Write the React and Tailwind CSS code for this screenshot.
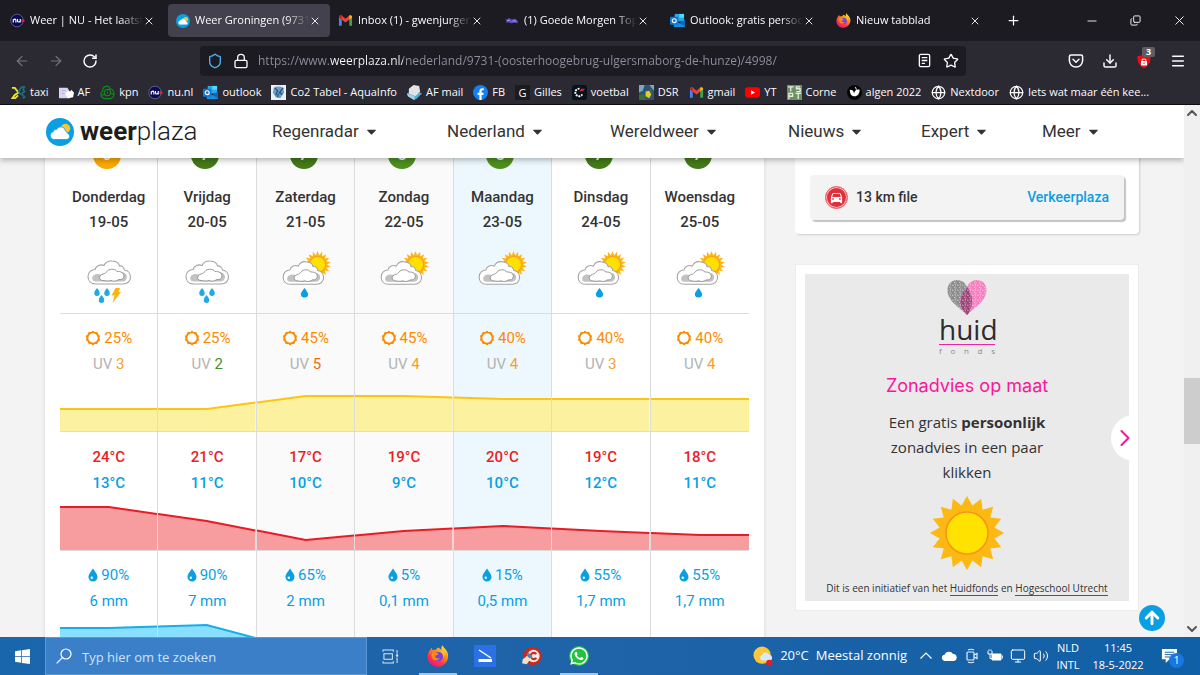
import React from "react";
import {
  ArrowLeft,
  ArrowRight,
  ArrowUp,
  ChevronDown,
  ChevronRight,
  ChevronUp,
  Copy,
  Download,
  Globe,
  Lock,
  Menu,
  Minus,
  Monitor,
  Plus,
  RotateCw,
  Shield,
  Star,
  Volume2,
  X,
} from "lucide-react";
import { FaCaretDown, FaWhatsapp } from "react-icons/fa";
import { MdDirectionsCar } from "react-icons/md";

/* ---------- Site icons ---------- */

const WeerplazaIcon = ({ className }) => (
  <svg viewBox="0 0 28 28" className={className}>
    <circle cx="14" cy="14" r="14" fill="#0a9fe3" />
    <circle cx="19.500" cy="10.500" r="4.700" fill="#fdc52c" />
    <path d="M7.500 21.500a4 4 0 0 1-.3-7.800 3 3 0 0 1 3.300-2.300 4.800 4.800 0 0 1 9 1.700 3 3 0 0 1 2 2.200 3.200 3.200 0 0 1-.5 6.200z" fill="#fff" stroke="#0a9fe3" strokeWidth=".8" />
  </svg>
);

const NuIcon = ({ className }) => (
  <svg viewBox="0 0 16 16" className={className}>
    <circle cx="7.500" cy="8" r="6.700" fill="#0b0b55" stroke="#8d8db5" strokeWidth=".6" />
    <path d="M3.500 10V6.600M3.500 7.500q2.500-2 2.800.3V10M8 6.300v2.400q.5 1.800 2.900 0V6.300V10" fill="none" stroke="#fff" strokeWidth="1.200" />
    <circle cx="13.800" cy="8.200" r="1.700" fill="#e2232f" />
  </svg>
);

const GmailIcon = ({ className }) => (
  <svg viewBox="0 0 16 16" className={className}>
    <path d="M1 13.500V4.500l3 2.200v6.800z" fill="#4285f4" />
    <path d="M15 13.500V4.500l-3 2.200v6.800z" fill="#34a853" />
    <path d="M1 4.700C1 2.500 3 2 4.200 3L8 6l3.800-3C13 2 15 2.500 15 4.700L8 10z" fill="#ea4335" />
    <path d="M12 3v4l3-2.300C15 2.500 13.200 2 12 3z" fill="#fbbc04" />
    <path d="M4 3v4L1 4.700C1 2.500 2.800 2 4 3z" fill="#c5221f" />
  </svg>
);

const TopicsIcon = ({ className }) => (
  <svg viewBox="0 0 16 16" className={className}>
    <path d="M1 6l3 1 1-2 3 2 4-1 3 3-1 2-3-1-3 1-3-1-3 0 1-2z" fill="#5b52c9" />
    <path d="M9 8.500h4M3 8h3" stroke="#b8b2ff" strokeWidth=".8" />
  </svg>
);

const OutlookIcon = ({ className }) => (
  <svg viewBox="0 0 16 16" className={className}>
    <path d="M5 1h10v8H5z" fill="#28a8ea" />
    <path d="M10 1h5v4h-5z" fill="#50d9ff" />
    <path d="M4 7l6 4 6-4v7a1 1 0 0 1-1 1H5a1 1 0 0 1-1-1z" fill="#1490df" />
    <path d="M16 7v7l-6-3z" fill="#1066b5" />
    <rect y="4" width="9" height="8.500" rx="1" fill="#0f78d4" />
    <circle cx="4.500" cy="8.200" r="2.100" fill="none" stroke="#fff" strokeWidth="1.200" />
  </svg>
);

const FirefoxIcon = ({ className, id }) => (
  <svg viewBox="0 0 24 24" className={className}>
    <defs>
      <linearGradient id={id} x1=".85" y1="0" x2=".25" y2="1">
        <stop offset="0" stopColor="#fff44f" />
        <stop offset=".35" stopColor="#ff980e" />
        <stop offset=".7" stopColor="#ff3647" />
        <stop offset="1" stopColor="#e31587" />
      </linearGradient>
    </defs>
    <path d="M3.500 5.500C4 4 4.600 3.500 5 3c.2 1.300.6 2 1.200 2.600 1-.5 2.500-.6 3.500-.3C10.600 3.800 11.800 3 12.500 2.800c.8 1 2 1.700 3.300 2.400-.5-2 .1-3.700 1-4.900.6 2.500 5.700 5 6.200 10.200.8 7.300-4.700 13.200-11.200 13.200C5.400 23.700.7 18.800.7 12.700c0-2.800 1-5.500 2.800-7.200z" fill={`url(#${id})`} />
    <circle cx="12.500" cy="12.500" r="5" fill="#7542e5" />
    <path d="M5.500 8.500c2.500-1.300 5.500.2 7 1.300-.6 1.600-2.400 1.700-3.600 1.800-.5 2.300 2.200 3.700 5.100 2.700-1.500 3.100-6.300 3.300-8.200.3-1-1.700-1.200-4-.3-6.100z" fill="#ff8a16" />
    <path d="M14.500 7.500c2.300.8 3.800 3 3.200 6 2.200-2.300 1.800-5.600-.7-7.600z" fill="#ffbd2f" />
  </svg>
);

const TaxiIcon = ({ className }) => (
  <svg viewBox="0 0 16 16" className={className} fill="none" strokeWidth="2">
    <path d="M1 3h3l4 5-4 2.500L1.500 14h3l3-3" stroke="#e8e337" />
    <path d="M8 8l2-4.500 2-1.500h2l-1 3 1.500 2-3 1.500M9 9l3 1 2.500 3-2 1" stroke="#1d6b77" />
  </svg>
);

const AfIcon = ({ className }) => (
  <svg viewBox="0 0 16 16" className={className}>
    <path d="M0 3h9l2 3v8H0z" fill="#d9d5f2" />
    <path d="M7 8l3-2 2 1 1-2 3 3-1 5-5 1-3-3z" fill="#fff" />
    <path d="M3 6h4M3 9h3" stroke="#b2aadd" />
  </svg>
);

const KpnIcon = ({ className }) => (
  <svg viewBox="0 0 16 16" className={className} fill="none" stroke="#0b8f17" strokeWidth="1.200">
    <path d="M6 1.500c2-1 4.500.3 4.500 2.500 2.500.3 4.300 3 4.500 6-.2 3-3 4.500-5 4.500H5C2.500 14 .8 12 1 9c.3-1 1-1.600 2-2C2.500 5 3.500 2 6 1.500z" />
    <path d="M5.500 5.500l4-1 2 3-1 3.500-4 .5-2-3zM1.500 11l4-1M12 9l2.500 1M8 7v2" />
  </svg>
);

const Co2Icon = ({ className }) => (
  <svg viewBox="0 0 16 16" className={className}>
    <rect width="16" height="16" fill="#e9f1f8" />
    <path d="M3 3c3-2 7-2 10 0l1 5-4 6-5-1-3-5z" fill="#6f9cc6" />
    <path d="M4 3l3 3-2 5M13 3L9 8l3 2M7 13l1-4" stroke="#244d82" fill="none" strokeWidth="1.300" />
  </svg>
);

const AfMailIcon = ({ className }) => (
  <svg viewBox="0 0 16 16" className={className}>
    <path d="M0 9l8-4 8 4-6 6-3 1-6-4z" fill="#4fa8d8" />
    <path d="M2 4l5-4 6 1 1 6-5 5-7-3z" fill="#e3e3e3" />
    <path d="M0 9l8 3v4L1 12z" fill="#a9d3ea" />
  </svg>
);

const FacebookIcon = ({ className }) => (
  <svg viewBox="0 0 16 16" className={className}>
    <circle cx="8" cy="8" r="8" fill="#1380f5" />
    <path d="M6.800 16v-5.400H4.900V8.200h1.900V6.700c0-2.200 1.300-3.300 3.100-3.300l1.500.1v2h-1c-1 0-1.200.6-1.200 1.300v1.400h2.100l-.3 2.400H9.200V16z" fill="#fff" />
  </svg>
);

const GillesIcon = () => (
  <span className="grid size-[15px] place-items-center bg-[#1c1b1b] text-[11px]/[15px] text-white">G</span>
);

const VoetbalIcon = ({ className }) => (
  <svg viewBox="0 0 16 16" className={className}>
    <rect width="16" height="16" rx="3" fill="#06131f" />
    <path d="M8 4a4 4 0 1 0 3 6" stroke="#fff" strokeWidth="2" strokeDasharray="2 1" fill="none" />
    <path d="M8 7l2-3h4l-2 2z" fill="#f0202c" />
  </svg>
);

const DsrIcon = ({ className }) => (
  <svg viewBox="0 0 16 16" className={className}>
    <rect width="16" height="16" fill="#2c5374" />
    <path d="M0 0h6l-2 6-4 2zM11 0h5v6z" fill="#7fa9c0" />
    <path d="M0 11l5-2 3 7H0zM10 4l4 1v4z" fill="#3f6b3c" />
    <path d="M7 7l4-1 2 4-2 4-4-2z" fill="#e6cd22" />
  </svg>
);

const YoutubeIcon = ({ className }) => (
  <svg viewBox="0 0 16 16" className={className}>
    <rect y="2.500" width="16" height="11" rx="3" fill="#f00" />
    <path d="M6.400 5.500v5l4.200-2.500z" fill="#fff" />
  </svg>
);

const CorneIcon = ({ className }) => (
  <svg viewBox="0 0 16 16" className={className}>
    <rect width="16" height="16" fill="#6d8f63" />
    <path d="M1 2h6M4 2v5M14 2h-4v2h4v3h-4M2 15V9h4v3H2M9 9h6M12 9v6" stroke="#e3eedd" strokeWidth="1.400" fill="none" />
  </svg>
);

const AlgenIcon = ({ className }) => (
  <svg viewBox="0 0 16 16" className={className}>
    <circle cx="8" cy="8" r="8" fill="#050505" />
    <path d="M3 5c3 0 4 1 4.500 4C8 6 10 4 13.500 5c0 4-2 7-5.500 7S3 9 3 5z" fill="#fff" />
    <path d="M9 2l1 3" stroke="#fff" />
  </svg>
);

/* ---------- Browser chrome ---------- */

const tabs = [
  { title: "Weer | NU - Het laatste", icon: <NuIcon className="size-[15px]" /> },
  { title: "Weer Groningen (9731)", icon: <WeerplazaIcon className="size-[14px]" />, active: true },
  { title: "Inbox (1) - gwenjurgen", icon: <GmailIcon className="size-[15px]" /> },
  { title: "(1) Goede Morgen Top", icon: <TopicsIcon className="size-[15px]" /> },
  { title: "Outlook: gratis persoon", icon: <OutlookIcon className="size-[15px]" /> },
  { title: "Nieuw tabblad", icon: <FirefoxIcon id="ff-tab" className="size-[15px]" /> },
];

const bookmarks = [
  { label: "taxi", icon: <TaxiIcon className="size-[15px]" /> },
  { label: "AF", icon: <AfIcon className="size-[15px]" /> },
  { label: "kpn", icon: <KpnIcon className="size-[15px]" /> },
  { label: "nu.nl", icon: <NuIcon className="size-[15px]" /> },
  { label: "outlook", icon: <OutlookIcon className="size-[15px]" /> },
  { label: "Co2 Tabel - AquaInfo", icon: <Co2Icon className="size-[15px]" /> },
  { label: "AF mail", icon: <AfMailIcon className="size-[15px]" /> },
  { label: "FB", icon: <FacebookIcon className="size-[15px]" /> },
  { label: "Gilles", icon: <GillesIcon /> },
  { label: "voetbal", icon: <VoetbalIcon className="size-[15px]" /> },
  { label: "DSR", icon: <DsrIcon className="size-[15px]" /> },
  { label: "gmail", icon: <GmailIcon className="size-[15px]" /> },
  { label: "YT", icon: <YoutubeIcon className="size-[15px]" /> },
  { label: "Corne", icon: <CorneIcon className="size-[15px]" /> },
  { label: "algen 2022", icon: <AlgenIcon className="size-[15px]" /> },
  { label: "Nextdoor", icon: <Globe className="size-[15px]" /> },
  { label: "Iets wat maar één kee...", icon: <Globe className="size-[15px]" /> },
];

const TabStrip = () => (
  <div className="flex h-[41px] items-center bg-[#1c1b22] pl-[2px] text-[11px] text-[#fbfbfe]">
    {tabs.map((tab) => (
      <div
        key={tab.title}
        className={
          tab.active
            ? "flex h-[33px] w-[162px] items-center rounded bg-[#42414d] pr-[9px] pl-2"
            : "flex h-[33px] w-[166px] items-center pr-[13px] pl-2"
        }
      >
        <span className="mr-[5px] shrink-0">{tab.icon}</span>
        <button
          type="button"
          className="min-w-0 flex-1 overflow-hidden text-left whitespace-nowrap mask-r-from-80%"
        >
          {tab.title}
        </button>
        <button type="button" aria-label="Tabblad sluiten" className="shrink-0">
          <X className="size-3" strokeWidth={1.800} />
        </button>
      </div>
    ))}
    <button type="button" aria-label="Nieuw tabblad" className="ml-3">
      <Plus className="size-[15px]" />
    </button>
    <div className="ml-auto flex items-center gap-[31px] pr-[13px]">
      <button type="button" aria-label="Minimaliseren">
        <Minus className="size-[14px]" strokeWidth={1.500} />
      </button>
      <button type="button" aria-label="Herstellen">
        <Copy className="size-[11px] -scale-x-100 rotate-180" strokeWidth={2} />
      </button>
      <button type="button" aria-label="Sluiten">
        <X className="size-[15px]" strokeWidth={1.500} />
      </button>
    </div>
  </div>
);

const Toolbar = () => (
  <div className="flex h-[39px] items-center bg-[#2b2a33] text-[#fbfbfe]">
    <div className="flex w-[200px] shrink-0 items-center gap-[18px] pl-[14px]">
      <button type="button" aria-label="Terug" className="text-[#75747c]">
        <ArrowLeft className="size-4" strokeWidth={1.800} />
      </button>
      <button type="button" aria-label="Vooruit" className="text-[#75747c]">
        <ArrowRight className="size-4" strokeWidth={1.800} />
      </button>
      <button type="button" aria-label="Vernieuwen">
        <RotateCw className="size-4" strokeWidth={2.200} />
      </button>
    </div>
    <div className="flex h-[30px] flex-1 items-center rounded bg-[#1c1b22] px-[7px]">
      <Shield className="mr-[10px] size-4 shrink-0 text-[#4db5f5]" strokeWidth={2} />
      <Lock className="mr-[9px] size-4 shrink-0" strokeWidth={2} />
      <input
        type="text"
        aria-label="Adres"
        defaultValue="https://www.weerplaza.nl/nederland/9731-(oosterhoogebrug-ulgersmaborg-de-hunze)/4998/"
        className="min-w-0 flex-1 bg-[linear-gradient(90deg,#8f8f9d_72px,#fbfbfe_72px,#fbfbfe_145px,#8f8f9d_145px)] bg-clip-text text-[12px] text-transparent outline-none"
      />
      <button type="button" aria-label="Leesmodus" className="mr-[11px]">
        <svg viewBox="0 0 16 16" className="size-[15px]" fill="none" stroke="currentColor" strokeWidth="1.400">
          <rect x="2.500" y="1.500" width="11" height="13" rx="1.500" />
          <path d="M5 5h6M5 8h6M5 11h3.500" />
        </svg>
      </button>
      <button type="button" aria-label="Bladwijzer maken">
        <Star className="size-4" strokeWidth={2} />
      </button>
    </div>
    <div className="ml-[102px] flex shrink-0 items-center gap-[18px] pr-[14px]">
      <button type="button" aria-label="Pocket">
        <svg viewBox="0 0 16 16" className="size-4" fill="none" stroke="currentColor" strokeWidth="1.500" strokeLinecap="round" strokeLinejoin="round">
          <path d="M3 2h10a1.600 1.600 0 0 1 1.600 1.600V7.500a6.600 6.600 0 0 1-13.200 0V3.600A1.600 1.600 0 0 1 3 2z" />
          <path d="M5 6.300l3 2.900 3-2.900" />
        </svg>
      </button>
      <button type="button" aria-label="Downloads">
        <Download className="size-4" strokeWidth={2.200} />
      </button>
      <button type="button" aria-label="Advertentieblokkering" className="relative">
        <svg viewBox="0 0 16 16" className="size-4">
          <path d="M8 1c2 1.500 4 2 6.500 2C15 9 12.500 13 8 15.500 3.500 13 1 9 1.500 3 4 3 6 2.500 8 1z" fill="#ee0c14" />
          <path d="M5 8h6v4.500H5z" fill="#fff" />
          <path d="M6.200 8V6.200h3.600V8" fill="none" stroke="#fff" />
          <path d="M8 9.500v1.500" stroke="#ee0c14" />
        </svg>
        <span className="absolute -top-[6px] left-[6px] rounded-xs bg-[#5d5d62] px-1 text-[9px]/[10px] font-bold text-white">3</span>
      </button>
      <button type="button" aria-label="Menu">
        <Menu className="size-4" strokeWidth={2.200} />
      </button>
    </div>
  </div>
);

const BookmarksBar = () => (
  <div className="flex h-[25px] items-center gap-[10px] overflow-hidden border-b border-[#0c0c12] bg-[#2b2a33] pl-[11px] text-[11px] text-[#fbfbfe]">
    {bookmarks.map((item) => (
      <a key={item.label} href="#" className="flex shrink-0 items-center gap-1 whitespace-nowrap">
        {item.icon}
        {item.label}
      </a>
    ))}
  </div>
);

/* ---------- Forecast ---------- */

const days = [
  { name: "Donderdag", date: "19-05", grade: 6, sky: "storm", sun: 25, uv: 3, max: 24, min: 13, chance: 90, rain: "6" },
  { name: "Vrijdag", date: "20-05", grade: 7, sky: "rain", sun: 25, uv: 2, max: 21, min: 11, chance: 90, rain: "7" },
  { name: "Zaterdag", date: "21-05", grade: 7, sky: "sunRain", sun: 45, uv: 5, max: 17, min: 10, chance: 65, rain: "2" },
  { name: "Zondag", date: "22-05", grade: 8, sky: "sun", sun: 45, uv: 4, max: 19, min: 9, chance: 5, rain: "0,1" },
  { name: "Maandag", date: "23-05", grade: 8, sky: "sun", sun: 40, uv: 4, max: 20, min: 10, chance: 15, rain: "0,5" },
  { name: "Dinsdag", date: "24-05", grade: 7, sky: "sunRain", sun: 40, uv: 3, max: 19, min: 12, chance: 55, rain: "1,7" },
  { name: "Woensdag", date: "25-05", grade: 7, sky: "sunRain", sun: 40, uv: 4, max: 18, min: 11, chance: 55, rain: "1,7" },
];

const columnStyles = [
  "border-r border-[#dcdcdc]",
  "border-r border-[#dcdcdc]",
  "border-r border-[#dcdcdc] bg-[#fafafa]",
  "border-r border-[#dcdcdc] bg-[#fafafa]",
  "border-r border-[#dcdcdc] bg-[#edf8fe]",
  "border-r border-[#dcdcdc]",
  "",
];

const gradeStyles = { 6: "bg-[#fba800]", 7: "bg-[#447a19]", 8: "bg-[#4e8f1e]" };
const uvStyles = { 2: "text-[#4a8b2a]", 3: "text-[#f2a12e]", 4: "text-[#f2a12e]", 5: "text-[#f26a10]" };

// Line height above the bottom of the 54px chart strip, per day
const sunLine = [22, 22, 35, 35, 32, 32, 32];
const tempLine = [43, 29, 10, 19, 24, 19, 15];
const rainLine = [40, 43, 17, 4, 6, 14, 14];

function rayPath(cx, cy, outer, inner, count) {
  const points = [];
  for (let i = 0; i < count * 2; i++) {
    const r = i % 2 ? inner : outer;
    const a = (Math.PI * i) / count - Math.PI / 2;
    points.push(`${(cx + r * Math.cos(a)).toFixed(2)},${(cy + r * Math.sin(a)).toFixed(2)}`);
  }
  return points.join(" ");
}

const drop = "c2.200 2.800 2.700 3.800 2.700 5.200a2.700 2.700 0 0 1-5.400 0c0-1.400.5-2.400 2.700-5.200z";

const SkyIcon = ({ sky }) => {
  const sunny = sky === "sun" || sky === "sunRain";
  return (
    <svg viewBox="0 0 56 56" className="mx-auto size-14" aria-hidden="true">
      {sunny && (
        <>
          <polygon points={rayPath(39.500, 17.500, 13.500, 9.500, 18)} fill="#fdb515" />
          <circle cx="39.500" cy="17.500" r="8" fill="#ffe100" stroke="#f7941d" strokeWidth=".9" />
        </>
      )}
      <g transform={sunny ? "translate(-1.500 1) scale(.95 .98)" : undefined}>
        <path d="M15 37C9 37 7 33 7 29.500 7 25 10.500 22.500 14 22.500 15 18.500 19.500 17 23 18.500 24.500 15 28 13.700 31 14 35 14.200 38 16 38.500 19 41 18.500 43 20.500 43.500 23 47 23.500 49.500 26.500 49.500 30 49.500 34 46.500 37 42 37z" fill="#fff" stroke="#a3a3a3" strokeWidth="1.100" />
        <path d="M15 34.500C11 34.500 10.500 31 12 29c2-2.500 6-2 8-1.500L40 25c5 0 7 4 5.500 7-.8 1.700-2 2.500-4 2.500z" fill="#c2c2c2" />
        <path d="M22 33.500c-4 0-5-5 0-6.500 2-.5 2.500-1 4-2.500 1-2.500 8-3.500 10 0 4-.3 7 1.500 7 4.500 0 3-3 4-5 3.500-3 2-6 2-8 1-3 .8-5 .5-8 0z" fill="#fff" stroke="#8c8c8c" strokeWidth=".9" />
      </g>
      {sky === "sunRain" && <path d="M26.500 41c3 4 3.600 5 3.600 6.200a3.600 3.300 0 0 1-7.200 0c0-1.200.6-2.200 3.600-6.200z" fill="#0a9fe3" />}
      {(sky === "rain" || sky === "storm") && (
        <g fill="#1fa9e6" transform={sky === "storm" ? "translate(-7 0)" : undefined}>
          <path d={`M23 41${drop}`} />
          <path d={`M33 41${drop}`} />
          <path d={`M27.500 48${drop}`} />
        </g>
      )}
      {sky === "storm" && <path d="M34.500 41H39l-1.500 4H40L31.500 56l2-7.500h-3z" fill="#fdb515" />}
    </svg>
  );
};

const ChartCell = ({ line, index, stroke, fill, className }) => {
  const value = line[index];
  const prev = index > 0 ? line[index - 1] : value;
  const next = index < line.length - 1 ? line[index + 1] : value;
  const top = `0,${54 - (prev + value) / 2} 50,${54 - value} 100,${54 - (value + next) / 2}`;
  return (
    <td className={`${className} border-b border-b-[#dcdcdc] p-0`}>
      <svg viewBox="0 0 100 54" preserveAspectRatio="none" className="block h-[54px] w-full" aria-hidden="true">
        <polygon points={`${top} 100,54 0,54`} fill={fill} />
        <polyline points={top} fill="none" stroke={stroke} strokeWidth="2" vectorEffect="non-scaling-stroke" />
      </svg>
    </td>
  );
};

const SunSmall = () => (
  <svg viewBox="0 0 16 16" className="size-4" aria-hidden="true">
    <circle cx="8" cy="8" r="5.500" fill="none" stroke="#fb8a00" strokeWidth="1.600" />
    <polygon points={rayPath(8, 8, 7, 5.700, 10)} fill="none" stroke="#fb8a00" strokeWidth="1" />
  </svg>
);

const DropSmall = () => (
  <svg viewBox="0 0 10 14" className="h-[14px] w-[10px]" aria-hidden="true">
    <path d="M5 .5c3 4.500 4.500 6.200 4.500 8.500a4.500 4.500 0 0 1-9 0C.5 6.700 2 5 5 .5z" fill="#0a9fe3" />
    <circle cx="3.800" cy="9.800" r="1.200" fill="#fff" />
  </svg>
);

const ForecastTable = () => (
  <section className="min-w-0 flex-1 bg-white px-[15px] shadow-[0_0_4px_rgba(0,0,0,0.12)]">
    <table className="w-full table-fixed border-separate border-spacing-0 text-center text-[15px]/[26px]">
      <thead>
        <tr>
          {days.map((day, i) => (
            <th key={day.name} scope="col" className={`${columnStyles[i]} border-b border-b-[#dcdcdc] px-0 pt-9 pb-[10px] font-medium text-[#333]`}>
              <div className="mb-4 flex justify-center pr-1">
                <span className={`${gradeStyles[day.grade]} grid size-7 place-items-center rounded-full text-base text-white`}>
                  {day.grade}
                </span>
              </div>
              <div className="leading-[25px]">{day.name}</div>
              <div className="mb-3 leading-[25px]">{day.date}</div>
              <SkyIcon sky={day.sky} />
            </th>
          ))}
        </tr>
      </thead>
      <tbody>
        <tr>
          {days.map((day, i) => (
            <td key={day.name} className={`${columnStyles[i]} px-0 pt-[11px] pb-0`}>
              <div className="flex items-center justify-center gap-[3px] text-[#fb8a00]">
                <SunSmall />
                {day.sun}%
              </div>
              <div className="text-[#b3b3b3]">
                UV <span className={uvStyles[day.uv]}>{day.uv}</span>
              </div>
            </td>
          ))}
        </tr>
        <tr>
          {days.map((day, i) => (
            <ChartCell key={day.name} line={sunLine} index={i} stroke="#fdc513" fill="#fcf19f" className={columnStyles[i]} />
          ))}
        </tr>
        <tr>
          {days.map((day, i) => (
            <td key={day.name} className={`${columnStyles[i]} px-0 pt-3 pb-0 font-medium`}>
              <div className="text-[#ec1c24]">{day.max}°C</div>
              <div className="text-[#0a9fe3]">{day.min}°C</div>
            </td>
          ))}
        </tr>
        <tr>
          {days.map((day, i) => (
            <ChartCell key={day.name} line={tempLine} index={i} stroke="#e81c25" fill="#f79c9f" className={columnStyles[i]} />
          ))}
        </tr>
        <tr>
          {days.map((day, i) => (
            <td key={day.name} className={`${columnStyles[i]} px-0 pt-[11px] pb-0 text-[#0a9fe3]`}>
              <div className="flex items-center justify-center gap-[3px]">
                <DropSmall />
                {day.chance}%
              </div>
              <div>{day.rain} mm</div>
            </td>
          ))}
        </tr>
        <tr>
          {days.map((day, i) => (
            <ChartCell key={day.name} line={rainLine} index={i} stroke="#14aee8" fill="#8adfff" className={columnStyles[i]} />
          ))}
        </tr>
      </tbody>
    </table>
  </section>
);

/* ---------- Page ---------- */

const SiteHeader = () => (
  <header className="absolute inset-x-0 top-0 z-10 flex h-[53px] items-center bg-white pr-[80px] pl-[46px] shadow-[0_2px_6px_rgba(0,0,0,0.3)]">
    <a href="#" className="flex w-[226px] shrink-0 items-center gap-[6px] text-[26px] text-[#1d1d1b]">
      <WeerplazaIcon className="size-7" />
      <span>
        <span className="font-bold">weer</span>
        <span className="font-light">plaza</span>
      </span>
    </a>
    <nav className="grid flex-1 grid-cols-[175fr_163fr_178fr_133fr_121fr_62fr] text-[17px] text-[#333]">
      {["Regenradar", "Nederland", "Wereldweer", "Nieuws", "Expert", "Meer"].map((item) => (
        <a key={item} href="#" className="flex items-center gap-[5px] whitespace-nowrap">
          {item}
          <FaCaretDown className="size-[15px]" />
        </a>
      ))}
    </nav>
  </header>
);

const TrafficCard = () => (
  <section className="rounded-b bg-white px-[15px] pt-[70px] pb-[14px] shadow-[1px_1px_2px_rgba(0,0,0,0.15)]">
    <div className="flex h-[45px] items-center rounded bg-[#f3f3f3] px-[15px] text-[14px] font-medium text-[#333] shadow-[2px_2px_1px_#c4c4c4]">
      <span className="mr-2 grid size-[23px] place-items-center rounded-full border border-[#e8707a] bg-[#e0303c] text-white ring-1 ring-white/70 ring-inset">
        <MdDirectionsCar className="size-[15px]" />
      </span>
      13 km file
      <a href="#" className="ml-auto text-[#0a9fe3]">Verkeerplaza</a>
    </div>
  </section>
);

const HuidfondsLogo = () => (
  <div className="mx-auto w-14 font-['Open_Sans',sans-serif]">
    <svg viewBox="0 0 40 36" className="mx-auto block h-9 w-10" aria-hidden="true">
      <defs>
        <pattern id="speckle" width="5" height="5" patternUnits="userSpaceOnUse">
          <path d="M0 1l1.500.5M3 0l.5 1.500M2 3.500l1.500-.5M4.500 4l-1 .8" stroke="#fff" strokeWidth=".7" opacity=".8" />
        </pattern>
      </defs>
      <path d="M20 36C12 28 .5 22 .5 11 .5 0 15-3 20 8c3 4 5 8 5 15 0 5-2 10-5 13z" fill="#8c8c8c" />
      <path d="M20 36c8-8 19.500-14 19.500-25C39.500 0 25-3 20 8c-4 5-7 10-7 16 1 5 4 9 7 12z" fill="#f57dc0" />
      <path d="M20 8c3 4 5 8 5 15 0 5-2 10-5 13-3-3-6-7-7-12 0-6 3-11 7-16z" fill="#9b4478" />
      <path d="M20 36C12 28 .5 22 .5 11 .5 0 15-3 20 8c5-11 19.500-8 19.500 3 0 11-11.500 17-19.500 25z" fill="url(#speckle)" />
    </svg>
    <div className="border-b border-b-[#f0259b] text-center text-[28px]/[29px] text-[#2d2d2d]">huid</div>
    <div className="text-[8px]/[12px] text-[#8a8a8a] [text-align-last:justify]">f o n d s</div>
  </div>
);

const SunAdviceCard = () => (
  <section className="relative mt-[30px] overflow-hidden border border-[#ececec] bg-white p-[9px]">
    <div className="bg-[#eaeaea] py-[5px] text-center font-['Open_Sans',sans-serif] text-[#333]">
      <HuidfondsLogo />
      <h2 className="mt-[17px] font-['Inter',sans-serif] text-[18px]/[24px] text-[#f9179a]">Zonadvies op maat</h2>
      <p className="mx-auto mt-3 w-[170px] text-[15px]/[25px]">
        Een gratis <strong>persoonlijk</strong> zonadvies in een paar klikken
      </p>
      <svg viewBox="0 0 74 74" className="mx-auto mt-[11px] block size-[74px]" aria-hidden="true">
        <polygon points={rayPath(37, 37, 37, 28, 16)} fill="#fdb913" />
        <circle cx="37" cy="37" r="21" fill="#ffe200" stroke="#f7941d" strokeWidth="1.600" />
      </svg>
      <p className="mt-[11px] text-[10px]/[15px] whitespace-nowrap">
        Dit is een initiatief van het <a href="#" className="border-b border-[#555]">Huidfonds</a> en{" "}
        <a href="#" className="border-b border-[#555]">Hogeschool Utrecht</a>
      </p>
    </div>
    <button
      type="button"
      aria-label="Volgende"
      className="absolute top-[150px] -right-[19px] flex size-[46px] items-center rounded-full bg-white text-[#f9179a]"
    >
      <ChevronRight className="size-7" strokeWidth={1.800} />
    </button>
  </section>
);

const ScrollBar = () => (
  <div className="flex w-4 shrink-0 flex-col items-center bg-[#f0f0f0] text-[#555]">
    <ChevronUp className="size-4" strokeWidth={3} />
    <div className="flex-[258]" />
    <div className="h-[66px] w-full bg-[#cdcdcd]" />
    <div className="flex-[177]" />
    <ChevronDown className="size-4" strokeWidth={3} />
  </div>
);

/* ---------- Taskbar ---------- */

const Taskbar = () => (
  <footer className="flex h-[38px] shrink-0 items-center bg-linear-to-r from-[#1a66ac] via-[#1f63a8] to-[#0f60a6] text-white">
    <button type="button" aria-label="Start" className="grid w-[45px] shrink-0 place-items-center">
      <svg viewBox="0 0 16 16" className="size-[15px]" fill="#fff">
        <path d="M0 2.300l6.500-.9v6.200H0zM7.300 1.300L16 0v7.600H7.300zM0 8.400h6.500v6.200L0 13.700zM7.300 8.400H16V16l-8.700-1.200z" />
      </svg>
    </button>
    <label className="flex h-full w-[322px] items-center gap-[10px] border border-[#5b98d8] bg-[#3a7fc8] px-[10px]">
      <svg viewBox="0 0 16 16" className="size-4 shrink-0" fill="none" stroke="currentColor" strokeWidth="1.200">
        <circle cx="10" cy="6" r="5" />
        <path d="M6.300 9.700L.7 15.300" />
      </svg>
      <input
        type="text"
        aria-label="Zoeken"
        placeholder="Typ hier om te zoeken"
        className="min-w-0 flex-1 bg-transparent pt-[3px] text-[13px] outline-none placeholder:text-[#cfe2f6]"
      />
    </label>
    <button type="button" aria-label="Taakweergave" className="grid h-full w-[47px] place-items-center">
      <svg viewBox="0 0 18 16" className="h-[15px] w-[17px]" fill="none" stroke="#d6e6f5" strokeWidth="1.100">
        <path d="M1 3V1h11v2M1 13v2h11v-2M2 5h9v6H2zM16 1v4M16 9v6" />
        <circle cx="16" cy="7" r=".8" fill="#fff" />
      </svg>
    </button>
    <button type="button" aria-label="Firefox" className="grid h-full w-[47px] place-items-center bg-[linear-gradient(#9cc8f5,#9cc8f5)] bg-[length:38px_2px] bg-bottom bg-no-repeat">
      <FirefoxIcon id="ff-task" className="size-[22px]" />
    </button>
    <button type="button" aria-label="Scanner" className="grid h-full w-[47px] place-items-center">
      <svg viewBox="0 0 22 22" className="size-[22px]">
        <rect width="22" height="22" fill="#2b70e4" />
        <path d="M5 5l12 8" stroke="#fff" strokeWidth="1.500" />
        <path d="M4.500 14H18v3H4.500z" fill="#fff" />
      </svg>
    </button>
    <button type="button" aria-label="CCleaner" className="grid h-full w-[47px] place-items-center">
      <svg viewBox="0 0 22 22" className="size-[21px]">
        <circle cx="12" cy="10.500" r="9.500" fill="#d3261b" />
        <circle cx="13" cy="10.500" r="6.500" fill="#f6e9e4" />
        <path d="M16 8.500a3.300 3.300 0 1 0 0 4" fill="none" stroke="#d3261b" strokeWidth="2.200" />
        <path d="M8 9l3 3-5 7-5-1 1-4z" fill="#f0e2c8" />
        <path d="M8 7l4 4-3 2-3-3z" fill="#3f86c9" />
      </svg>
    </button>
    <button type="button" aria-label="WhatsApp" className="grid h-full w-[47px] place-items-center bg-[linear-gradient(#9cc8f5,#9cc8f5)] bg-[length:38px_2px] bg-bottom bg-no-repeat">
      <span className="grid size-5 place-items-center rounded-full bg-[#25c23f]">
        <FaWhatsapp className="size-5" />
      </span>
    </button>

    <div className="ml-auto flex h-full shrink-0 items-center">
      <button type="button" className="mr-[11px] flex items-center gap-[7px] text-[13px] whitespace-nowrap">
        <svg viewBox="0 0 22 22" className="size-5">
          <circle cx="10" cy="10" r="9.500" fill="#fdc63b" />
          <path d="M10 16a3.500 3.500 0 0 1 0-6.500 4.500 4.500 0 0 1 8 0 3.400 3.400 0 0 1 1 6.500z" fill="#d7eafa" />
          <circle cx="18" cy="18.500" r="3.500" fill="#e11d2b" />
        </svg>
        <span>20°C</span>
        <span>Meestal zonnig</span>
      </button>
      <div className="flex items-center gap-[7px]">
        <svg viewBox="0 0 16 16" className="size-4" fill="none" stroke="#fff" strokeWidth="1.200">
          <path d="M2.500 10.500L8 5l5.500 5.500" />
        </svg>
        <svg viewBox="0 0 16 16" className="size-4">
          <path d="M3.500 13a3.200 3.200 0 0 1 0-6.300 4.700 4.700 0 0 1 8.500-.6 3.500 3.500 0 0 1 1 6.900z" fill="#fff" />
        </svg>
        <svg viewBox="0 0 16 16" className="size-4" fill="none" stroke="#e6f0fa" strokeWidth="1.200">
          <rect x="3" y="4" width="7" height="8" rx="1" />
          <path d="M10 7l3-1.500v5L10 9M4 2q3-1.500 6 0M4 14q3 1.500 6 0" />
        </svg>
        <svg viewBox="0 0 16 16" className="size-4" fill="none" stroke="#fff">
          <path d="M5 6h9v6H5z" fill="#fff" />
          <path d="M15.300 7.500v3M1 3v3h4V3M2 3V1.500M4 3V1.500M3 6v4.500h2" />
        </svg>
        <Monitor className="size-4" strokeWidth={1.500} />
        <Volume2 className="size-4" strokeWidth={1.500} />
      </div>
      <div className="w-[38px] text-center text-[11px]/[17px]">
        <div>NLD</div>
        <div>INTL</div>
      </div>
      <div className="w-[62px] text-center text-[11px]/[17px] whitespace-nowrap">
        <div>11:45</div>
        <div>18-5-2022</div>
      </div>
      <button type="button" aria-label="Meldingen" className="relative mr-[15px] ml-3 h-5 w-6">
        <svg viewBox="0 0 18 18" className="size-[17px]">
          <path d="M1 1h16v11H9l-4 4v-4H1z" fill="#fff" />
          <path d="M4 4.500h10M4 7h10M4 9.500h6" stroke="#1160a6" />
        </svg>
        <span className="absolute top-[7px] left-2 grid size-[15px] place-items-center rounded-full bg-[#1878e0] text-[10px]/[15px]">1</span>
      </button>
    </div>
  </footer>
);

const App = () => (
  <div className="flex h-screen flex-col overflow-hidden font-['Open_Sans','Noto_Sans',sans-serif]">
    <TabStrip />
    <Toolbar />
    <BookmarksBar />
    <div className="flex min-h-0 flex-1 bg-[#f3f3f3] font-['Roboto',sans-serif]">
      <div className="relative min-w-0 flex-1 overflow-hidden">
        <SiteHeader />
        <main className="flex items-start gap-[31px] px-[45px]">
          <ForecastTable />
          <aside className="w-[344px] shrink-0">
            <TrafficCard />
            <SunAdviceCard />
          </aside>
        </main>
        <button
          type="button"
          aria-label="Naar boven"
          className="absolute right-[19px] bottom-[6px] grid size-[26px] place-items-center rounded-full bg-[#0a9fe3] text-white"
        >
          <ArrowUp className="size-5" strokeWidth={3.500} />
        </button>
      </div>
      <ScrollBar />
    </div>
    <Taskbar />
  </div>
);

export default App;
